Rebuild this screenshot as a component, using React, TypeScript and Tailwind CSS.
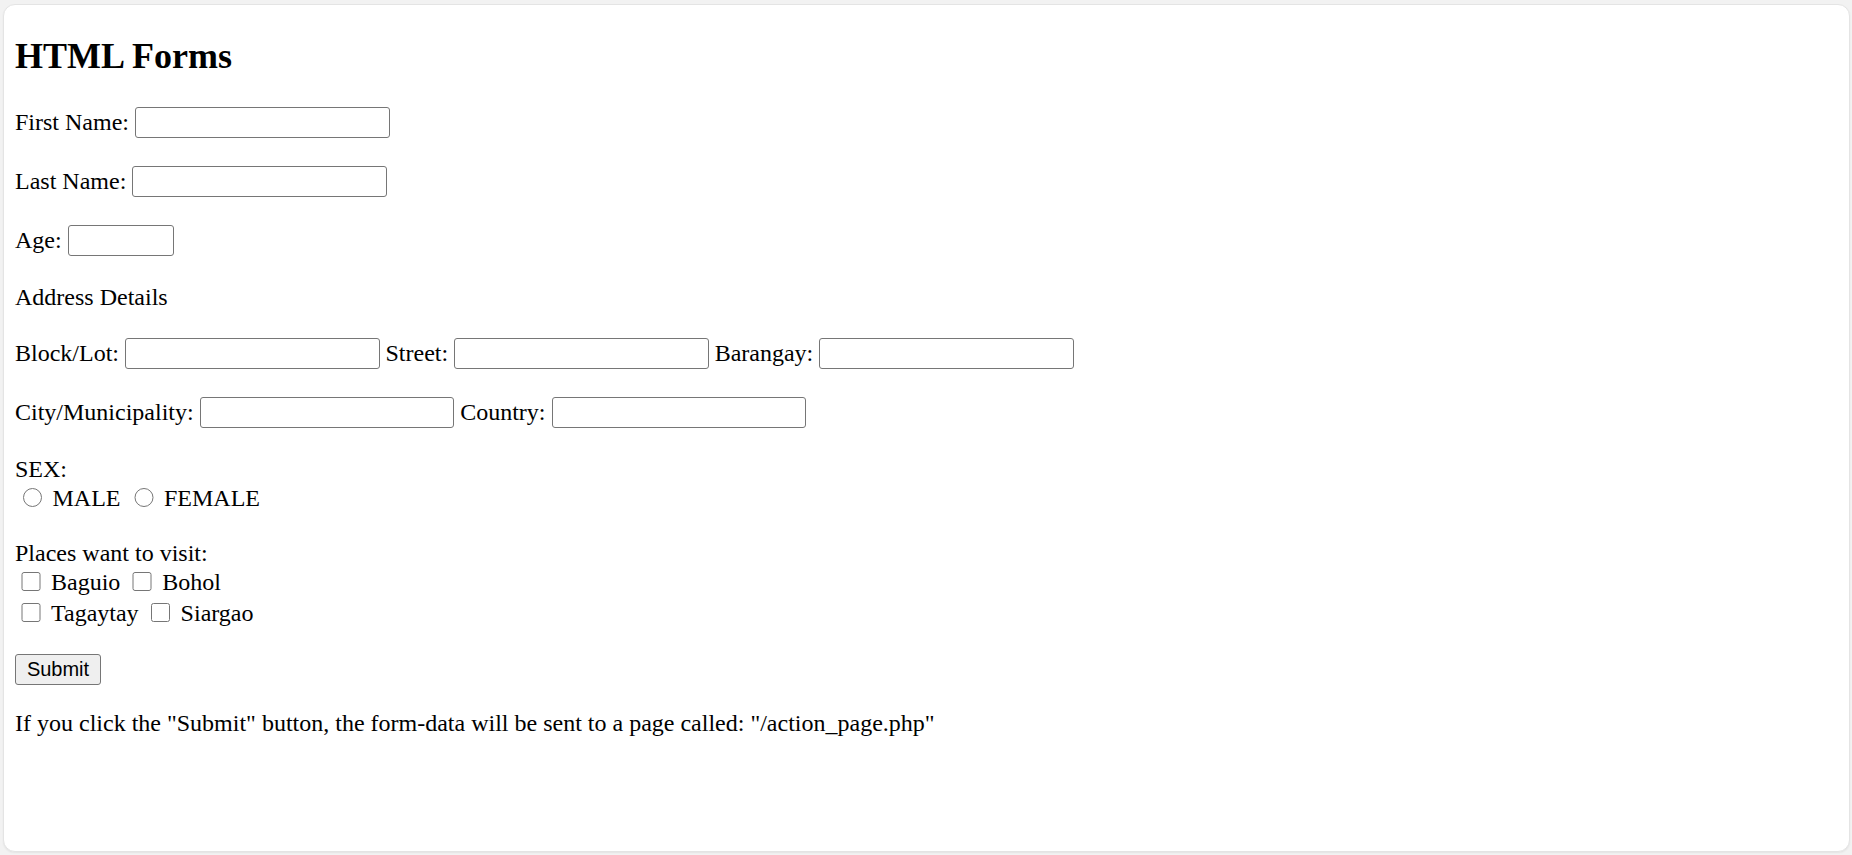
import React from 'react';

const TextInput: React.FC<{ width?: string }> = ({ width = 'w-[254.5px]' }) => (
  <input
    type="text"
    className={`${width} h-[31px] shrink-0 rounded-[3px] border border-[#767676] bg-white px-[3px] font-['Liberation_Sans',sans-serif] text-[20px] outline-none`}
  />
);

const Label: React.FC<{ children: React.ReactNode }> = ({ children }) => (
  <span className="leading-[27px] whitespace-nowrap">{children}</span>
);

export default function App() {
  return (
    <div className="min-h-screen bg-[#f2f2f2] pt-[4px] pl-[3px] pr-[2px] pb-[3px]">
      {/* result panel */}
      <div className="h-[848px] rounded-[12px] border border-[#e4e4e4] bg-white pl-[11px] pt-[31px] font-['Liberation_Serif',serif] text-[24px] text-black shadow-[0_1px_2px_rgba(0,0,0,0.06)]">
        <h2 className="text-[36px] font-bold leading-[40px]">HTML Forms</h2>

        <form action="/action_page.php" onSubmit={(e) => e.preventDefault()} className="flex flex-col">
          <div className="mt-[31px] flex h-[31px] items-center gap-[6px]">
            <Label>First Name:</Label>
            <TextInput />
          </div>

          <div className="mt-[28px] flex h-[31px] items-center gap-[6px]">
            <Label>Last Name:</Label>
            <TextInput />
          </div>

          <div className="mt-[28px] flex h-[31px] items-center gap-[6px]">
            <Label>Age:</Label>
            <TextInput width="w-[106px]" />
          </div>

          <div className="mt-[28px] leading-[27px]">Address Details</div>

          <div className="mt-[27px] flex h-[31px] items-center gap-[6px]">
            <Label>Block/Lot:</Label>
            <TextInput />
            <Label>Street:</Label>
            <TextInput />
            <Label>Barangay:</Label>
            <TextInput />
          </div>

          <div className="mt-[28px] flex h-[31px] items-center gap-[6px]">
            <Label>City/Municipality:</Label>
            <TextInput />
            <Label>Country:</Label>
            <TextInput />
          </div>

          {/* sex */}
          <div className="mt-[28px] leading-[27px]">SEX:</div>
          <div className="mt-[2px] flex h-[27px] items-center gap-[6px]">
            <input type="radio" name="sex" className="ml-[7.5px] mr-[4.5px] mb-[2px] h-[19.5px] w-[19.5px]" />
            <Label>MALE</Label>
            <input type="radio" name="sex" className="ml-[7.5px] mr-[4.5px] mb-[2px] h-[19.5px] w-[19.5px]" />
            <Label>FEMALE</Label>
          </div>

          {/* places */}
          <div className="mt-[28px] leading-[27px]">Places want to visit:</div>
          <div className="flex h-[31px] items-center gap-[6px]">
            <input type="checkbox" className="ml-[6px] mr-[4.5px] mb-[2px] h-[19.5px] w-[19.5px]" />
            <Label>Baguio</Label>
            <input type="checkbox" className="ml-[6px] mr-[4.5px] mb-[2px] h-[19.5px] w-[19.5px]" />
            <Label>Bohol</Label>
          </div>
          <div className="flex h-[31px] items-center gap-[6px]">
            <input type="checkbox" className="ml-[6px] mr-[4.5px] mb-[2px] h-[19.5px] w-[19.5px]" />
            <Label>Tagaytay</Label>
            <input type="checkbox" className="ml-[6px] mr-[4.5px] mb-[2px] h-[19.5px] w-[19.5px]" />
            <Label>Siargao</Label>
          </div>

          <div className="mt-[25px] flex h-[31px]">
            <button
              type="submit"
              className="h-[31px] w-[86px] rounded-[3px] border border-[#767676] bg-[#efefef] font-['Liberation_Sans',sans-serif] text-[20px] leading-[23px] text-black"
            >
              Submit
            </button>
          </div>
        </form>

        <p className="mt-[25px] leading-[27px]">
          If you click the "Submit" button, the form-data will be sent to a page called: "/action_page.php"
        </p>
      </div>
    </div>
  );
}
